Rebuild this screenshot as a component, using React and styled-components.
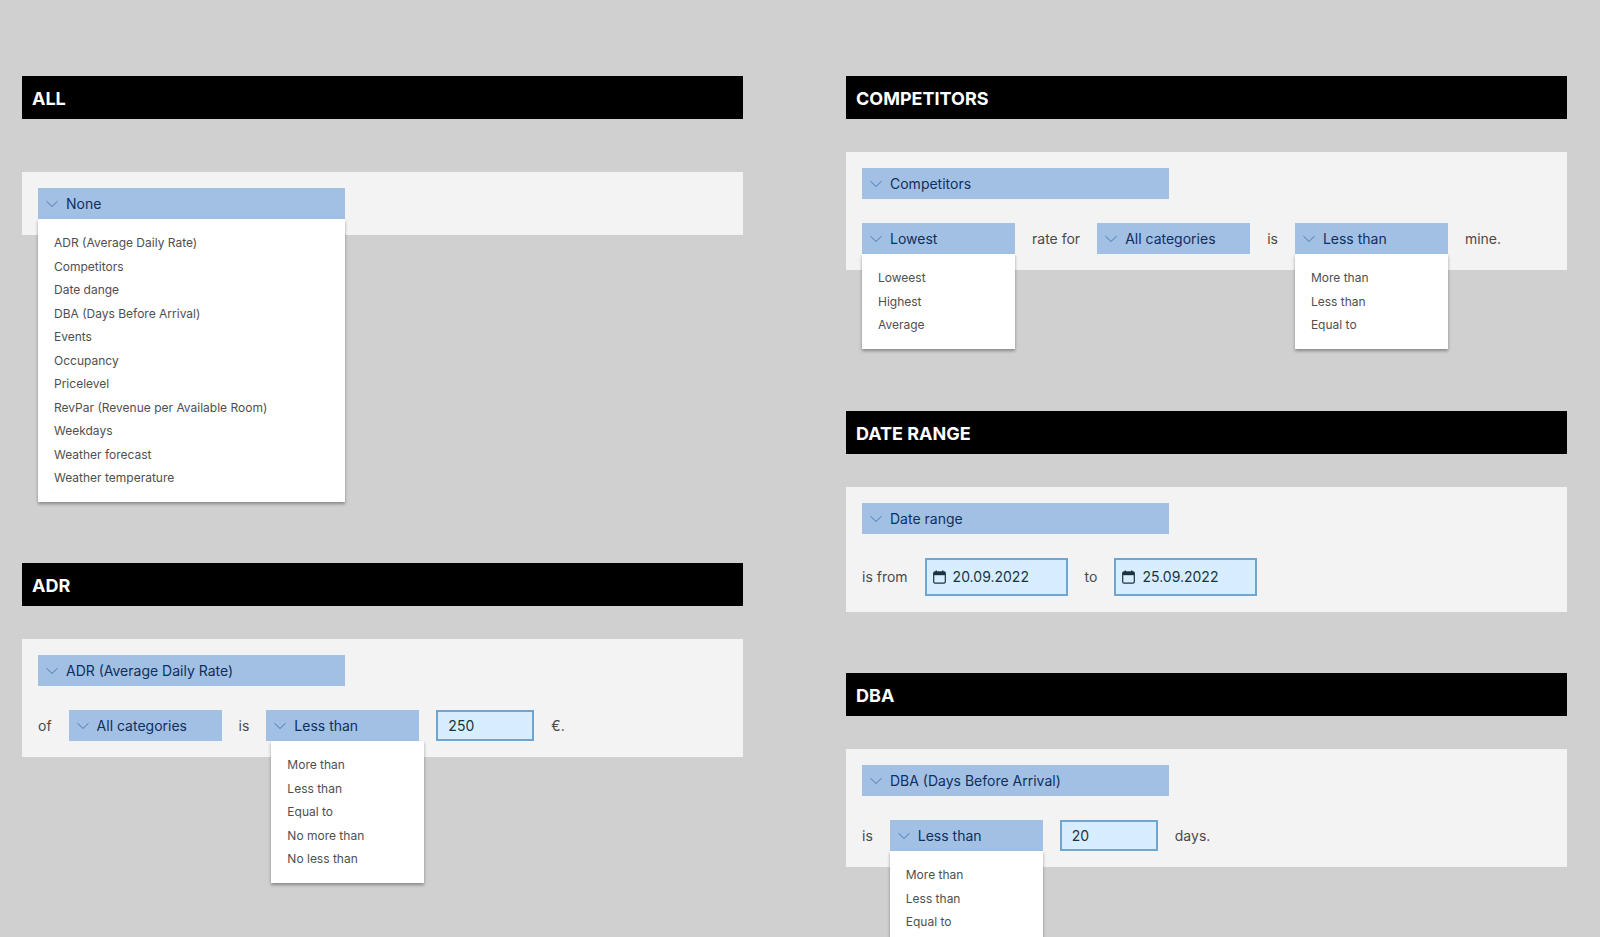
import { useId, useState } from 'react'
import styled, { createGlobalStyle } from 'styled-components'

const GlobalStyle = createGlobalStyle`
* {
  box-sizing: border-box;
}
body {
  margin: 0;
  background: #d0d0d0;
  font-family: Inter, "Liberation Sans", sans-serif;
}
input, select, button {
  font-family: inherit;
}
`;

const Page = styled.main`
display: grid;
grid-template-columns: 1fr 1fr;
column-gap: 103px;
height: 100vh;
padding: 76px 33px 0 22px;
overflow: hidden;
`;

const Column = styled.div`
display: flex;
flex-direction: column;
min-width: 0;
`;

const Section = styled.section`
display: flex;
flex-direction: column;
gap: ${({ $gap }) => $gap || 33}px;
margin-bottom: ${({ $space }) => $space || 0}px;
`;

const Title = styled.h2`
margin: 0;
padding: 2px 10px 0;
background: #000;
color: #fff;
font-size: 18px;
font-weight: 700;
line-height: 41px;
`;

const Panel = styled.div`
display: flex;
flex-direction: column;
align-items: flex-start;
gap: 24px;
padding: 16px;
background: #f3f3f3;
`;

const Row = styled.div`
display: flex;
align-items: center;
gap: 17px;
`;

const Word = styled.span`
color: #4a4a4a;
font-size: 14px;
line-height: 20px;
white-space: nowrap;
`;

const DropdownBox = styled.div`
position: relative;
width: ${({ $wide }) => ($wide ? 307 : 153)}px;
`;

const DropdownHead = styled.label`
display: flex;
align-items: center;
gap: 8px;
height: 31px;
padding: 0 8px;
background: #a2c0e4;
color: #4779b4;
`;

const Select = styled.select`
flex: 1;
min-width: 0;
padding: 0;
border: 0;
outline: 0;
appearance: none;
background: transparent;
color: #0f2f5c;
font-size: 14px;
line-height: 20px;
`;

const Menu = styled.ul`
position: absolute;
z-index: 1;
top: 100%;
left: ${({ $shift }) => $shift || 0}px;
width: 100%;
margin: 0;
padding: 12px 16px 13px;
list-style: none;
background: #fff;
box-shadow: 0 2px 3px rgba(0, 0, 0, 0.35);
`;

const MenuItem = styled.li`
display: flex;
height: 23px;
&:nth-child(even) {
  height: 24px;
}
`;

const MenuButton = styled.button`
flex: 1;
padding: 0;
border: 0;
background: transparent;
color: #4f4f4f;
font-size: 12px;
text-align: left;
cursor: pointer;
`;

const Field = styled.label`
display: flex;
align-items: center;
gap: 7px;
width: ${({ $date }) => ($date ? 143 : 98)}px;
height: ${({ $date }) => ($date ? 38 : 31)}px;
padding: 0 ${({ $date }) => ($date ? 6 : 10)}px;
border: 2px solid #6fa5cf;
background: #d6eeff;
color: #1d3440;
`;

const Input = styled.input`
flex: 1;
min-width: 0;
padding: 0;
border: 0;
outline: 0;
background: transparent;
color: #1d3440;
font-size: 14px;
line-height: 20px;
`;

const Chevron = () => (
    <svg width="12" height="8" viewBox="0 0 12 8" fill="none" stroke="currentColor" aria-hidden="true">
        <path d="M0.5 1.2 L6 6.5 L11.5 1.2" />
    </svg>
)

const Calendar = () => (
    <svg width="13" height="14" viewBox="0 0 13 14" fill="none" aria-hidden="true">
        <rect x="0.7" y="2" width="11.6" height="11.2" rx="1.4" stroke="currentColor" strokeWidth="1.2" />
        <path d="M0.7 1.6 H12.3 V5.2 H0.7 Z" fill="currentColor" />
        <path d="M3.3 0.4 V3 M9.7 0.4 V3" stroke="currentColor" strokeWidth="1.4" />
    </svg>
)

const Dropdown = ({ label, initial, options = [], wide, shift }) => {
    const [value, setValue] = useState(initial)
    const id = useId()
    const choices = [...new Set([initial, ...options])]

    return (
        <DropdownBox $wide={wide}>
            <DropdownHead htmlFor={id}>
                <Chevron />
                <Select id={id} aria-label={label} value={value} onChange={(e) => setValue(e.target.value)}>
                    {choices.map((choice) => <option key={choice}>{choice}</option>)}
                </Select>
            </DropdownHead>
            {options.length > 0 && (
                <Menu $shift={shift}>
                    {options.map((option) => (
                        <MenuItem key={option}>
                            <MenuButton type="button" onClick={() => setValue(option)}>{option}</MenuButton>
                        </MenuItem>
                    ))}
                </Menu>
            )}
        </DropdownBox>
    )
}

const TextField = ({ label, value, date }) => (
    <Field $date={date}>
        {date && <Calendar />}
        <Input type="text" aria-label={label} defaultValue={value} />
    </Field>
)

const conditions = [
    'ADR (Average Daily Rate)',
    'Competitors',
    'Date dange',
    'DBA (Days Before Arrival)',
    'Events',
    'Occupancy',
    'Pricelevel',
    'RevPar (Revenue per Available Room)',
    'Weekdays',
    'Weather forecast',
    'Weather temperature',
]

const comparisons = ['More than', 'Less than', 'Equal to']

const App = () => {
    return (
        <>
            <GlobalStyle />
            <Page>
                <Column>
                    <Section $gap={53} $space={328}>
                        <Title>ALL</Title>
                        <Panel>
                            <Dropdown wide label="Condition" initial="None" options={conditions} />
                        </Panel>
                    </Section>
                    <Section>
                        <Title>ADR</Title>
                        <Panel>
                            <Dropdown wide label="Condition" initial="ADR (Average Daily Rate)" />
                            <Row>
                                <Word>of</Word>
                                <Dropdown label="Category" initial="All categories" />
                                <Word>is</Word>
                                <Dropdown
                                    label="Comparison"
                                    initial="Less than"
                                    options={[...comparisons, 'No more than', 'No less than']}
                                    shift={5}
                                />
                                <TextField label="Rate" value="250" />
                                <Word>€.</Word>
                            </Row>
                        </Panel>
                    </Section>
                </Column>
                <Column>
                    <Section $space={141}>
                        <Title>COMPETITORS</Title>
                        <Panel>
                            <Dropdown wide label="Condition" initial="Competitors" />
                            <Row>
                                <Dropdown label="Rank" initial="Lowest" options={['Loweest', 'Highest', 'Average']} />
                                <Word>rate for</Word>
                                <Dropdown label="Category" initial="All categories" />
                                <Word>is</Word>
                                <Dropdown label="Comparison" initial="Less than" options={comparisons} />
                                <Word>mine.</Word>
                            </Row>
                        </Panel>
                    </Section>
                    <Section $space={61}>
                        <Title>DATE RANGE</Title>
                        <Panel>
                            <Dropdown wide label="Condition" initial="Date range" />
                            <Row>
                                <Word>is from</Word>
                                <TextField date label="From" value="20.09.2022" />
                                <Word>to</Word>
                                <TextField date label="To" value="25.09.2022" />
                            </Row>
                        </Panel>
                    </Section>
                    <Section>
                        <Title>DBA</Title>
                        <Panel>
                            <Dropdown wide label="Condition" initial="DBA (Days Before Arrival)" />
                            <Row>
                                <Word>is</Word>
                                <Dropdown label="Comparison" initial="Less than" options={comparisons} />
                                <TextField label="Days" value="20" />
                                <Word>days.</Word>
                            </Row>
                        </Panel>
                    </Section>
                </Column>
            </Page>
        </>
    )
}

export default App
